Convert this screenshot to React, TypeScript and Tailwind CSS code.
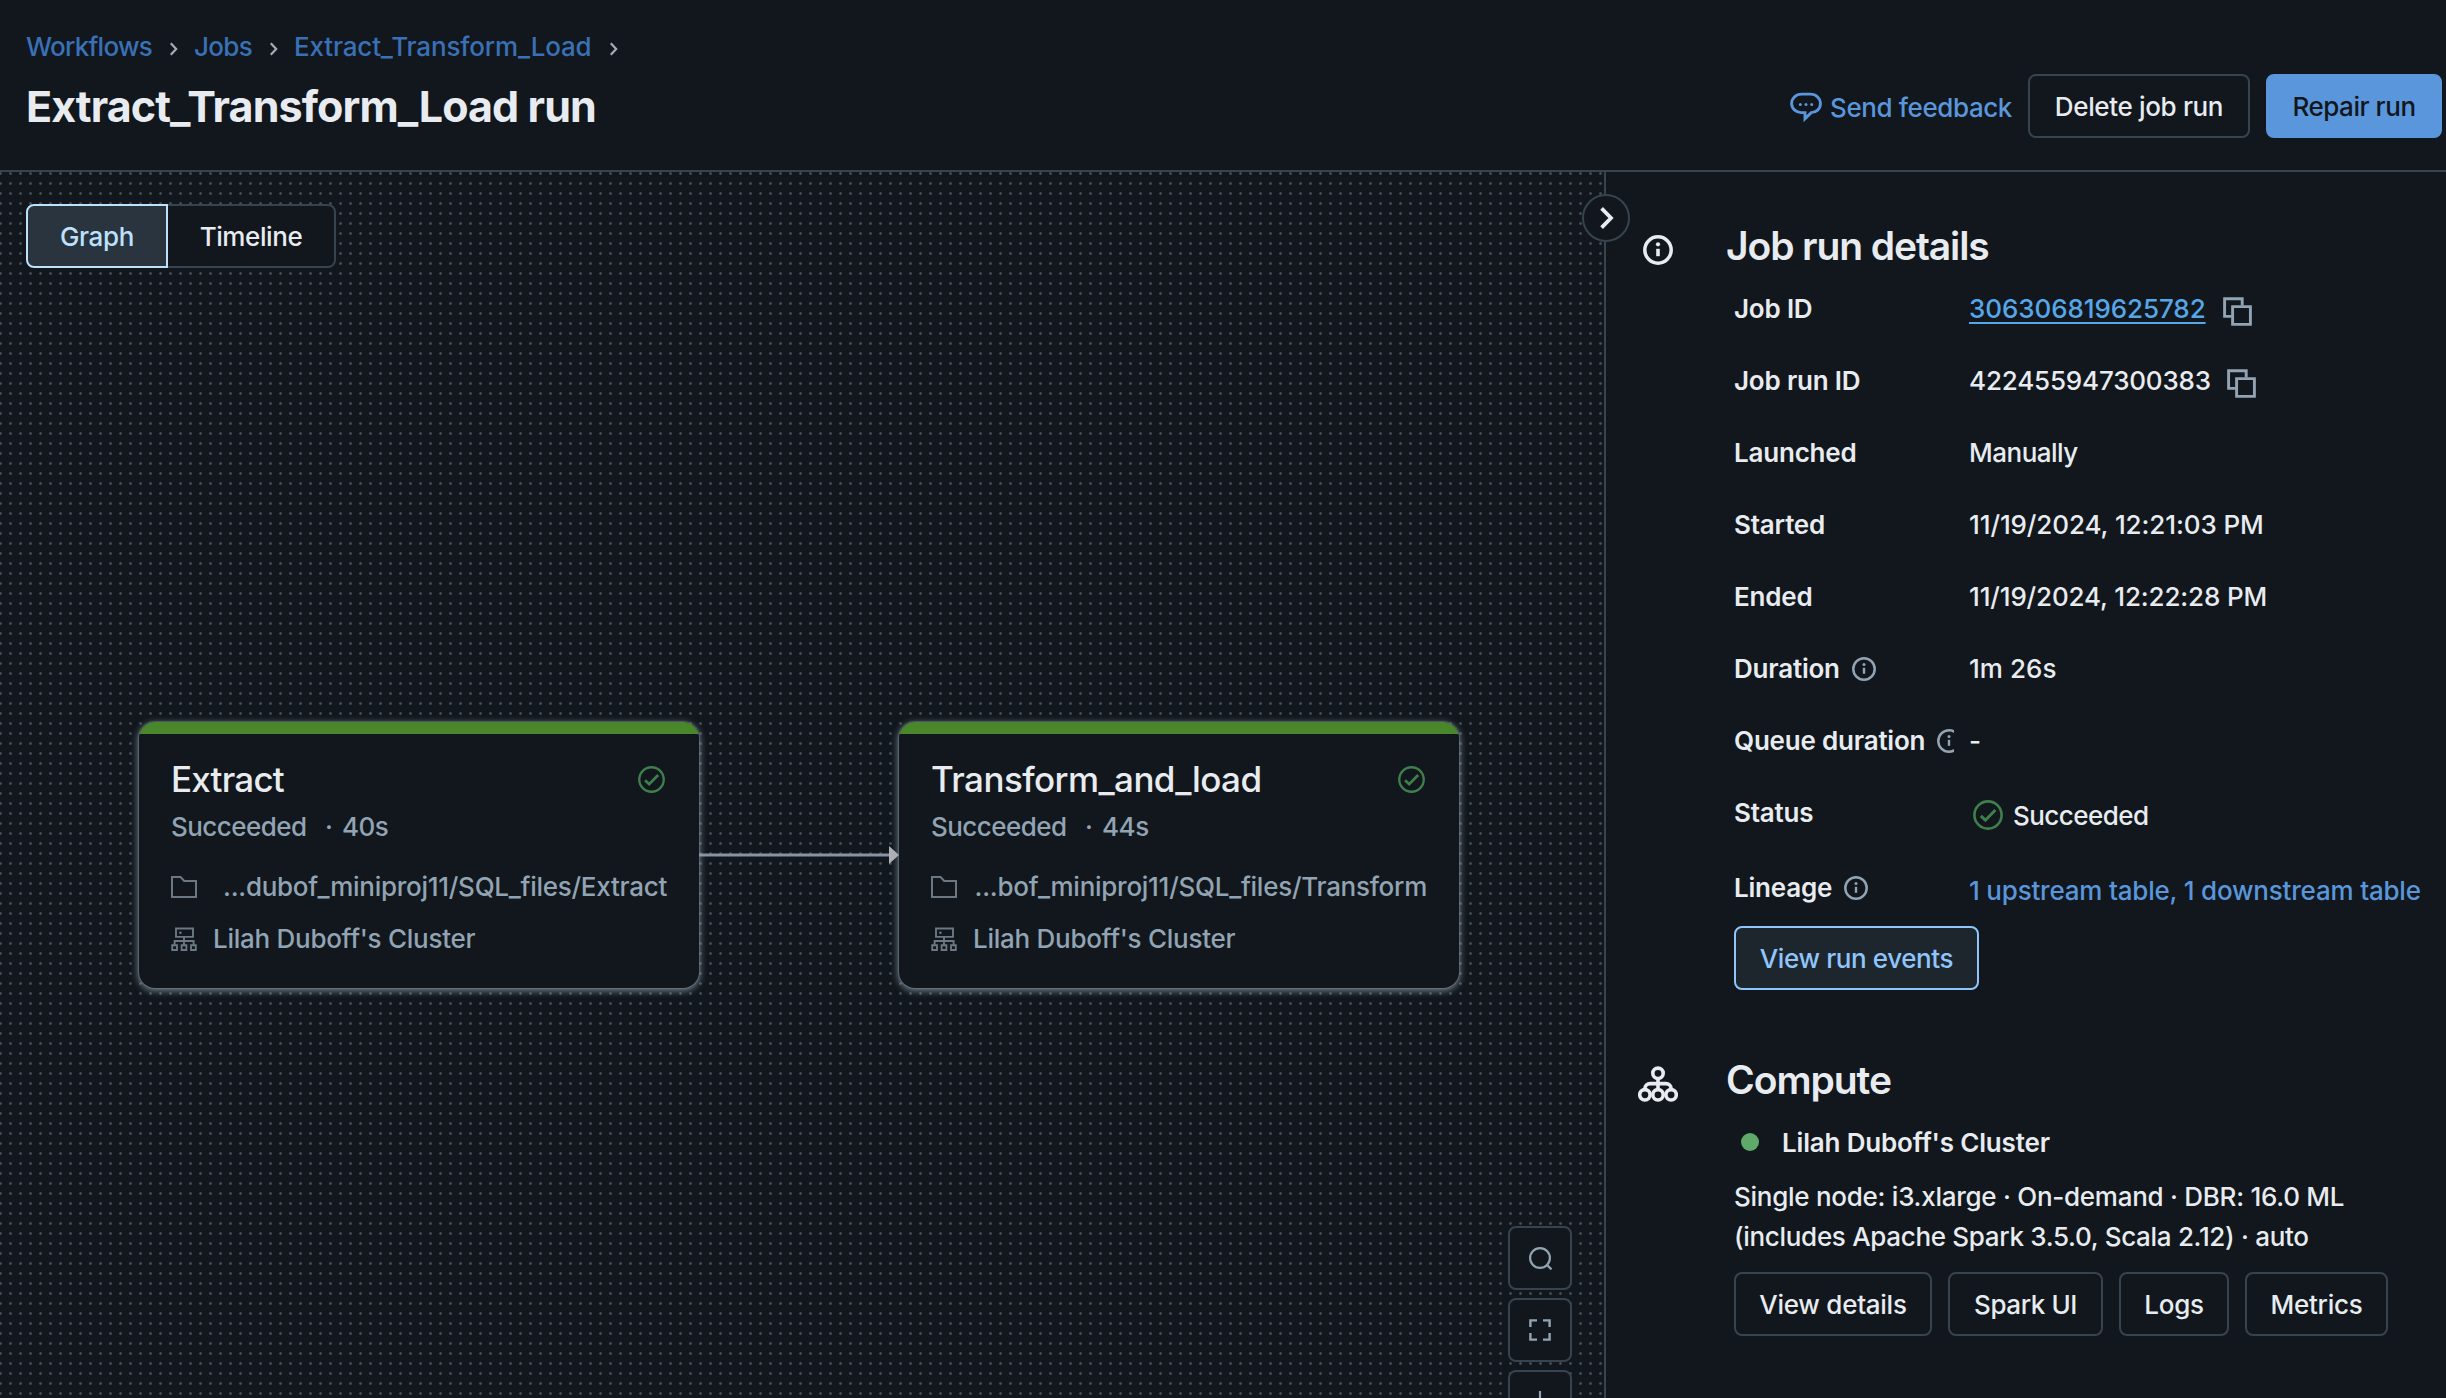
import React from 'react';

type IconProps = { className?: string };

function ChevronSmall() {
  return (
    <svg className="mt-[3px] h-[14px] w-[10px] text-[#a3adb7]" viewBox="0 0 10 14" fill="none" stroke="currentColor" strokeWidth="2.2">
      <path d="M1.8 1.2 7.2 7 1.8 12.8" />
    </svg>
  );
}

function ChatIcon() {
  return (
    <svg className="mt-[2px] h-8 w-8 shrink-0" viewBox="0 0 32 32" fill="none" stroke="currentColor">
      <path
        d="M11.5 3.1h9A9.9 9.4 0 0 1 30.4 12.8c0 5.3-4.2 8.6-9.2 8.8l-6.2 6.2v-6.2h-3.5A9.6 9.4 0 0 1 1.6 12.8 9.9 9.4 0 0 1 11.5 3.1Z"
        strokeWidth="2.9"
      />
      <g fill="currentColor" stroke="none">
        <circle cx="10.3" cy="13.5" r="1.5" />
        <circle cx="16" cy="13.5" r="1.5" />
        <circle cx="21.7" cy="13.5" r="1.5" />
      </g>
    </svg>
  );
}

function InfoIcon({ className }: IconProps) {
  return (
    <svg className={className} viewBox="0 0 24 24" fill="none">
      <circle cx="12" cy="12" r="10.7" stroke="currentColor" strokeWidth="2.5" />
      <circle cx="12" cy="7.5" r="1.5" fill="currentColor" />
      <path d="M12 10.8v6" stroke="currentColor" strokeWidth="2.4" />
    </svg>
  );
}

function InfoIconLarge() {
  return (
    <svg className="h-[30px] w-[30px]" viewBox="0 0 30 30" fill="none">
      <circle cx="15" cy="15" r="13.2" stroke="currentColor" strokeWidth="3.5" />
      <circle cx="15" cy="9.3" r="2.1" fill="currentColor" />
      <path d="M15 13.8v7.4" stroke="currentColor" strokeWidth="3.6" />
    </svg>
  );
}

function ComputeIcon() {
  return (
    <svg className="h-9 w-10" viewBox="0 0 40 36" fill="none" stroke="currentColor" strokeWidth="3.6">
      <circle cx="20" cy="7.3" r="5.2" />
      <circle cx="6.9" cy="28.8" r="5.2" />
      <circle cx="20" cy="28.8" r="5.2" />
      <circle cx="33.1" cy="28.8" r="5.2" />
      <path d="M20 12.5v11M6.9 23.5v-.7a5.2 5.2 0 0 1 5.2-5.2h15.8a5.2 5.2 0 0 1 5.2 5.2v.7" />
    </svg>
  );
}

function CheckCircle({ className }: IconProps) {
  return (
    <svg className={className} viewBox="0 0 30 30" fill="none" stroke="currentColor" strokeWidth="2.6">
      <circle cx="15" cy="15" r="13.6" />
      <path d="m7.8 15.8 4.6 4.4 10-10.2" strokeWidth="3" />
    </svg>
  );
}

function CopyIcon() {
  return (
    <svg className="h-[29px] w-[29px] text-[#92a4b3]" viewBox="0 0 29 29" fill="none" stroke="currentColor" strokeWidth="2.9">
      <path d="M8.6 19.4H1.6V1.8h17.6v6.8" />
      <path d="M9.6 9.6h17.8v17.8H9.6z" />
    </svg>
  );
}

function FolderIcon() {
  return (
    <svg className="h-[22px] w-[26px] text-[#6b7883]" viewBox="0 0 26 22" fill="none" stroke="currentColor" strokeWidth="2">
      <path d="M1 1h8.6l3.6 4H25v16H1z" />
    </svg>
  );
}

function ClusterIcon() {
  return (
    <svg className="h-[25px] w-[26px] text-[#6b7883]" viewBox="0 0 26 25" fill="none" stroke="currentColor" strokeWidth="1.9">
      <path d="M5 1.5h17v8.4H5zM13 10v8M3.6 18v-4h19v4" />
      <path d="M1.2 18.2h4.8V23H1.2zM10.6 18.2h4.8V23h-4.8zM20 18.2h4.8V23H20z" />
      <circle cx="9.4" cy="5.7" r="1.3" fill="currentColor" stroke="none" />
    </svg>
  );
}

function Button({ children, className = '' }: { children: React.ReactNode; className?: string }) {
  return (
    <button className={`flex h-16 shrink-0 items-center justify-center rounded-lg border-2 pt-px ${className}`}>
      {children}
    </button>
  );
}

type Task = { name: string; tracking: string; time: string; path: string; place: string };

const tasks: Task[] = [
  { name: 'Extract', tracking: 'tracking-[-0.8px]', time: '40s', path: '...dubof_miniproj11/SQL_files/Extract', place: 'left-[139px]' },
  { name: 'Transform_and_load', tracking: 'tracking-[-0.57px]', time: '44s', path: '...bof_miniproj11/SQL_files/Transform', place: 'left-[899px]' },
];

function TaskNode({ task }: { task: Task }) {
  return (
    <div
      className={`absolute top-[550px] flex h-[266px] w-[560px] flex-col overflow-hidden rounded-2xl bg-[#11171c] text-[#92a4b3] shadow-[0_0_1px_1px_rgba(125,141,155,0.4),0_2px_7px_1px_rgba(150,168,184,0.7)] ${task.place}`}
    >
      <div className="h-3 shrink-0 bg-[#4a872c]" />
      <div className="flex flex-col px-8 pt-[21px]">
        <div className="flex h-12 items-center justify-between">
          <span className={`text-[35px] text-[#e8ecf0] ${task.tracking}`}>{task.name}</span>
          <CheckCircle className="mr-[2px] h-[27px] w-[27px] text-[#3f7f4c]" />
        </div>
        <div className="mt-1 flex h-10 items-center">
          <span className="w-[154px] tracking-[-0.55px]">Succeeded</span>
          <span className="w-[17px]">·</span>
          <span className="tracking-[-0.5px]">{task.time}</span>
        </div>
        <div className="mt-5 flex h-10 items-center justify-between">
          <FolderIcon />
          <span>{task.path}</span>
        </div>
        <div className="mt-3 flex h-10 items-center gap-4">
          <ClusterIcon />
          <span>Lilah Duboff's Cluster</span>
        </div>
      </div>
    </div>
  );
}

function CanvasButton({ children }: { children: React.ReactNode }) {
  return (
    <button className="flex h-16 w-16 shrink-0 items-center justify-center rounded-lg border-2 border-[#37444f] bg-[#11171c] text-[#92a4b3]">
      {children}
    </button>
  );
}

function Canvas() {
  return (
    <div className="relative h-full w-[1604px] shrink-0 overflow-hidden bg-[radial-gradient(circle_at_5.5px_1.5px,#434d56_0.9px,transparent_1.8px)] bg-[length:10px_10px] bg-[position:-5px_0px]">
      <div className="mt-8 ml-[26px] flex h-16 w-[310px]">
        <button className="flex w-[142px] items-center justify-center rounded-l-lg border-2 border-[#bde0fb] bg-[#29343f] pt-px tracking-[-0.35px] text-[#bde0fb]">
          Graph
        </button>
        <button className="flex flex-1 items-center justify-center rounded-r-lg border-2 border-l-0 border-[#37444f] bg-[#11171c] pt-px tracking-[-0.4px]">
          Timeline
        </button>
      </div>
      <svg className="absolute top-[672px] left-[699px] h-6 w-[200px]" viewBox="0 0 200 24">
        <path d="M0 11h192" stroke="#8494a3" strokeWidth="3" />
        <path d="M190 2v18l10-9z" fill="#b1b1b7" />
      </svg>
      {tasks.map((t) => (
        <TaskNode key={t.name} task={t} />
      ))}
      <div className="absolute top-[1054px] left-[1508px] flex flex-col gap-2">
        <CanvasButton>
          <svg className="h-8 w-8" viewBox="0 0 32 32" fill="none" stroke="currentColor" strokeWidth="2.2">
            <circle cx="16" cy="16" r="9.9" />
            <path d="m22.8 22.8 4.7 4.6" />
          </svg>
        </CanvasButton>
        <CanvasButton>
          <svg className="h-8 w-8" viewBox="0 0 32 32" fill="none" stroke="currentColor" strokeWidth="2.4">
            <path d="M6.4 13V6.4H13M19 6.4h6.6V13M25.6 19v6.6H19M13 25.6H6.4V19" />
          </svg>
        </CanvasButton>
        <CanvasButton>
          <svg className="h-8 w-8" viewBox="0 0 32 32" fill="none" stroke="currentColor" strokeWidth="2.2">
            <path d="M16 5v22M5 16h22" />
          </svg>
        </CanvasButton>
      </div>
    </div>
  );
}

function Row({
  label,
  info,
  children,
  className = 'h-[72px]',
}: {
  label: string;
  info?: boolean;
  children: React.ReactNode;
  className?: string;
}) {
  return (
    <div className={`flex items-start gap-[15px] ${className}`}>
      <div className="flex h-10 w-[220px] shrink-0 items-center overflow-hidden font-semibold tracking-[-0.2px] whitespace-nowrap">
        {label}
        {info && <InfoIcon className="ml-3 h-6 w-6 shrink-0 text-[#92a4b3]" />}
      </div>
      {children}
    </div>
  );
}

function Details() {
  return (
    <div className="flex pt-[50px]">
      <div className="w-[120px] shrink-0 pt-[13px] pl-[37px]">
        <InfoIconLarge />
      </div>
      <div className="flex-1">
        <h2 className="h-12 text-[39px] leading-[48px] font-[560] tracking-[-1.1px]">Job run details</h2>
        <div className="mt-[19px] ml-2">
          <Row label="Job ID">
            <div className="flex items-start gap-[18px]">
              <span className="w-[236px] text-[#57a7e8] underline decoration-2 underline-offset-4 tracking-[-0.08px]">306306819625782</span>
              <span className="mt-2"><CopyIcon /></span>
            </div>
          </Row>
          <Row label="Job run ID">
            <div className="flex items-start gap-[18px]">
              <span className="w-[240px] tracking-[-0.18px]">422455947300383</span>
              <span className="mt-2"><CopyIcon /></span>
            </div>
          </Row>
          <Row label="Launched"><span className="tracking-[-0.5px]">Manually</span></Row>
          <Row label="Started"><span className="tracking-[-0.1px]">11/19/2024, 12:21:03 PM</span></Row>
          <Row label="Ended"><span className="tracking-[-0.15px]">11/19/2024, 12:22:28 PM</span></Row>
          <Row label="Duration" info><span className="tracking-[0.05px]">1m 26s</span></Row>
          <Row label="Queue duration" info><span>-</span></Row>
          <Row label="Status" className="h-[75px]">
            <div className="flex h-10 items-center gap-[10px] pt-[4px] pl-1">
              <CheckCircle className="h-[30px] w-[30px] text-[#3f7f4c]" />
              <span className="pt-px tracking-[-0.55px]">Succeeded</span>
            </div>
          </Row>
          <Row label="Lineage" info className="h-[58px]">
            <span className="pt-[3px] tracking-[-0.2px] whitespace-nowrap text-[#5a96db]">1 upstream table, 1 downstream table</span>
          </Row>
          <Button className="w-[245px] border-[#8fc5fa] bg-[#1e262d] tracking-[-0.4px] text-[#8fc5fa]">View run events</Button>
        </div>
      </div>
    </div>
  );
}

function Compute() {
  return (
    <div className="flex pt-[66px]">
      <div className="w-[120px] shrink-0 pt-[10px] pl-8">
        <ComputeIcon />
      </div>
      <div className="flex-1">
        <h2 className="h-12 text-[39px] leading-[48px] font-[560] tracking-[-1.05px]">Compute</h2>
        <div className="mt-[19px] ml-2">
          <div className="flex h-10 items-center gap-[23px] pl-[7px]">
            <span className="mb-[2px] h-[18px] w-[18px] rounded-full bg-[#5faa68]" />
            <span className="font-semibold tracking-[-0.17px]">Lilah Duboff's Cluster</span>
          </div>
          <p className="mt-[14px] whitespace-nowrap tracking-[-0.27px]">
            Single node: i3.xlarge · On-demand · DBR: 16.0 ML
            <br />
            <span className="tracking-[-0.31px]">(includes Apache Spark 3.5.0, Scala 2.12) · auto</span>
          </p>
          <div className="mt-[15px] flex gap-4">
            <Button className="w-[198px] border-[#37444f]">View details</Button>
            <Button className="w-[155px] border-[#37444f] tracking-[-0.4px]">Spark UI</Button>
            <Button className="w-[110px] border-[#37444f]">Logs</Button>
            <Button className="w-[143px] border-[#37444f]">Metrics</Button>
          </div>
        </div>
      </div>
    </div>
  );
}

export default function App() {
  return (
    <div className="flex h-[1398px] w-[2446px] flex-col overflow-hidden bg-[#11171c] font-['Inter',sans-serif] text-[26px] leading-10 font-[450] tracking-[-0.27px] text-[#e8ecf0]">
      <header className="flex h-[172px] shrink-0 items-start justify-between border-b-2 border-[#37444f] pr-1 pl-[26px]">
        <div className="pt-[27px]">
          <nav className="flex h-10 items-center text-[#3a70b5]">
            <span className="w-[143px] tracking-[-0.75px]">Workflows</span>
            <ChevronSmall />
            <span className="ml-[15px] w-[75px] tracking-[-0.7px]">Jobs</span>
            <ChevronSmall />
            <span className="ml-[15px] w-[315px] tracking-[-0.17px]">Extract_Transform_Load</span>
            <ChevronSmall />
          </nav>
          <h1 className="mt-[11px] text-[43px] leading-[56px] font-[650] tracking-[-0.9px]">Extract_Transform_Load run</h1>
        </div>
        <div className="flex items-center gap-4 pt-[74px]">
          <a className="flex items-center gap-2 text-[#5a96db]">
            <ChatIcon />
            <span className="pt-[3px] tracking-[-0.4px]">Send feedback</span>
          </a>
          <Button className="w-[222px] border-[#37444f] tracking-[-0.35px]">Delete job run</Button>
          <Button className="w-[176px] border-[#5a96db] bg-[#5a96db] tracking-[-0.45px] text-[#11171c]">Repair run</Button>
        </div>
      </header>
      <main className="flex min-h-0 flex-1">
        <Canvas />
        <aside className="relative flex-1 border-l-2 border-[#37444f]">
          <button className="absolute top-[22px] -left-6 flex h-12 w-12 items-center justify-center rounded-full border-2 border-[#37444f] bg-[#11171c]">
            <svg className="ml-px h-6 w-4" viewBox="0 0 16 24" fill="none" stroke="currentColor" strokeWidth="3.8">
              <path d="M2.6 2.4 12 12l-9.4 9.6" />
            </svg>
          </button>
          <Details />
          <Compute />
        </aside>
      </main>
    </div>
  );
}
